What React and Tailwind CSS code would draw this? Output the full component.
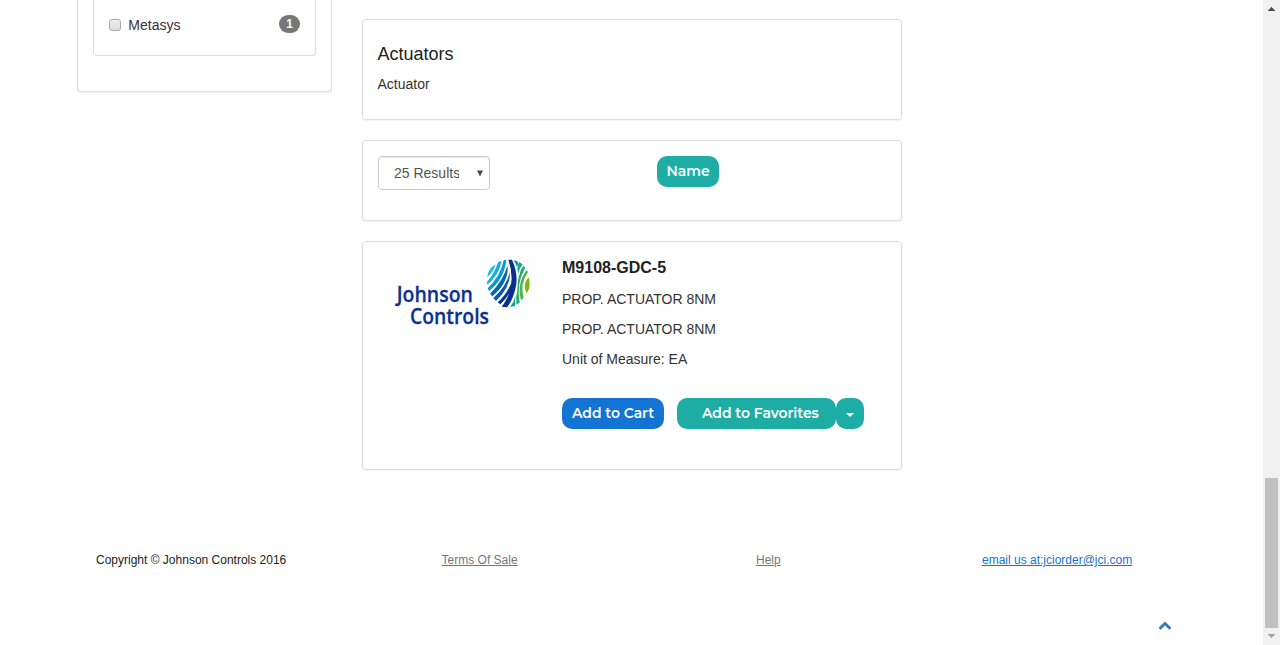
import React from "react";

const card = "rounded border border-[#ddd] bg-white shadow-[0_1px_1px_rgba(0,0,0,0.05)]";
const button =
  "flex h-[31px] items-center rounded-[10px] pb-[2px] font-['Montserrat','Inter',sans-serif] text-[14px] font-semibold tracking-[-0.05px] text-white";

function Logo() {
  return (
    <svg width="155" height="85" viewBox="0 0 465 255" className="block">
      <g fill="#0b3190" stroke="#0b3190" strokeWidth="0.8" fontFamily="Open Sans, Noto Sans, sans-serif" fontWeight="600" fontSize="64">
        <text x="35" y="155" textLength="229" lengthAdjust="spacingAndGlyphs">Johnson</text>
        <text x="75" y="223" textLength="237" lengthAdjust="spacingAndGlyphs">Controls</text>
      </g>
      <path fill="#12bfe0" d="M312 63Q320 49 332 43Q326 64 307 82Q307 72 312 63Z" />
      <path fill="#10b2dc" d="M338 38Q344 34 350 33Q341 77 307 104L306 95Q330 69 338 38Z" />
      <path fill="#0a98cf" d="M356 31L364 29Q358 87 312 123L308 115Q347 79 356 31Z" />
      <path fill="#0668b2" d="M368 46Q372 98 322 139L315 131Q353 95 368 46Z" />
      <path fill="#0759aa" d="M375 66Q376 112 333 153L325 144Q364 110 375 66Z" />
      <path fill="#092f90" d="M370 29L381 29Q402 74 391 118Q382 153 366 172L350 170Q397 108 370 29Z" />
      <path fill="#092f90" d="M381 92L380 117Q365 146 346 163L338 157Q370 128 381 92Z" />
      <path fill="#0a8daf" d="M385 31L398 34Q401 40 396 52Q393 39 385 31Z" />
      <path fill="#14a795" d="M402 36L413 43Q403 55 400 71L397 56Q398 46 402 36Z" />
      <path fill="#15a296" d="M391 137L390 168L375 171Q387 157 391 137Z" />
      <path fill="#28ad70" d="M414 47L421 53Q393 99 404 158L394 164Q391 142 397 121Q397 76 414 47Z" />
      <path fill="#4db64b" d="M425 60L429 66Q404 102 416 144L408 151Q394 101 425 60Z" />
      <path fill="#78bb0b" d="M431 82Q437 101 431 119L425 130Q411 103 431 82Z" />
    </svg>
  );
}

function Scrollbar() {
  return (
    <div className="flex h-[645px] w-[17px] flex-col items-center bg-[#f1f1f1]">
      <svg width="17" height="17" shapeRendering="crispEdges">
        <path fill="#505050" d="M8 7h1v1h1v1h1v1h1v1H5v-1h1V9h1V8h1z" />
      </svg>
      <div className="mt-[461px] h-[150px] w-[13px] bg-[#c1c1c1]" />
      <svg width="17" height="17" shapeRendering="crispEdges">
        <path fill="#a3a3a3" d="M5 6h7v1h-1v1h-1v1H9v1H8V9H7V8H6V7H5z" />
      </svg>
    </div>
  );
}

export default function App() {
  return (
    <div className="flex h-[645px] w-[1280px] overflow-hidden bg-white font-['Liberation_Sans',Arial,sans-serif] text-[14px] leading-5 text-[#333]">
      <div className="flex w-[1263px] flex-col">
        <div className="flex h-[470px] items-start pl-[77px]">
          <aside className={`${card} h-[92px] w-[255px] rounded-t-none border-t-0 px-[15px]`}>
            <div className="flex h-[56px] items-start rounded-b border border-t-0 border-[#ddd] px-[15px] pt-[15px]">
              <span className="mt-1 size-3 rounded-[3px] border border-[#aaa] bg-linear-to-b from-[#eee] to-[#ddd]" />
              <span className="ml-[7.3px]">Metasys</span>
              <span className="ml-auto flex h-[18px] w-[21px] items-center justify-center rounded-[10px] bg-[#777] text-[12px] font-bold leading-none text-white">
                1
              </span>
            </div>
          </aside>

          <main className="ml-[30px] flex w-[540px] flex-col gap-5 pt-[19px]">
            <section className={`${card} h-[101px] px-[14.5px] pt-[24px]`}>
              <h2 className="text-[18px] leading-5 text-[#222]">Actuators</h2>
              <p className="mt-[10px]">Actuator</p>
            </section>

            <section className={`${card} flex h-[81px] items-start px-[15px] pt-[15px]`}>
              <div className="flex h-[34px] w-[112px] items-center rounded border border-[#ccc] pl-[15px] text-[#555] shadow-[inset_0_1px_1px_rgba(0,0,0,0.075)]">
                <span className="w-[65px] overflow-hidden whitespace-nowrap">25 Results</span>
                <svg width="8" height="7" className="ml-[17px]">
                  <path fill="#444" d="M1 0.5h6L4 6.5z" />
                </svg>
              </div>
              <button className={`${button} ml-[167px] w-[62px] justify-center bg-[#1dada5]`}>Name</button>
            </section>

            <section className={`${card} flex h-[229px] items-start`}>
              <div className="ml-[22px] mt-[8px] w-[155px]">
                <Logo />
              </div>
              <div className="ml-[22px] pt-[16px]">
                <h3 className="text-[16px] font-bold leading-5 text-[#222]">M9108-GDC-5</h3>
                <p className="mt-[11px]">PROP. ACTUATOR 8NM</p>
                <p className="mt-[10px]">PROP. ACTUATOR 8NM</p>
                <p className="mt-[10px]">Unit of Measure: EA</p>
                <div className="mt-[29px] flex">
                  <button className={`${button} w-[102px] justify-center bg-[#1474d4]`}>Add to Cart</button>
                  <button className={`${button} ml-[13px] w-[159px] bg-[#1dada5] pl-[25px]`}>Add to Favorites</button>
                  <button className={`${button} w-[28px] justify-center bg-[#1dada5]`}>
                    <svg width="8" height="4" className="mt-[5px]">
                      <path fill="#fff" d="M0 0h8L4 4z" />
                    </svg>
                  </button>
                </div>
              </div>
            </section>
          </main>
        </div>

        <footer className="mt-[80px] flex h-5 pl-[96px] text-[12px] leading-5">
          <span className="w-[345.6px] text-[#222]">Copyright © Johnson Controls 2016</span>
          <a className="w-[314.4px] text-[#777] underline">Terms Of Sale</a>
          <a className="w-[226px] text-[#777] underline">Help</a>
          <a className="text-[#1474d4] underline">email us at:jciorder@jci.com</a>
        </footer>
        <div className="mt-[51px] flex justify-end pr-[91px]">
          <svg width="14" height="9" fill="none" stroke="#337ab7" strokeWidth="2.8">
            <path d="M1.6 7.7L7 2.4l5.4 5.3" />
          </svg>
        </div>
      </div>
      <Scrollbar />
    </div>
  );
}
